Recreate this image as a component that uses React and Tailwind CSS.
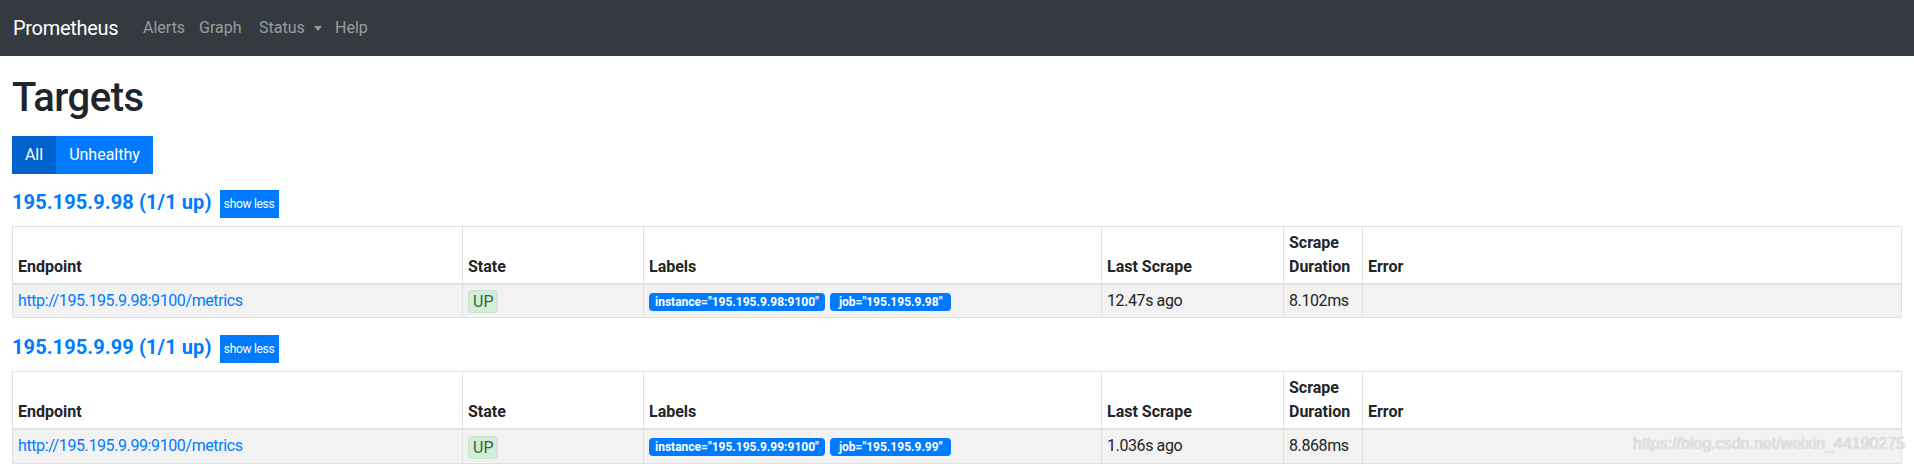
import React from 'react';

const groups = [
    { job: '195.195.9.98', instance: '195.195.9.98:9100', last: '12.47s ago', dur: '8.102ms' },
    { job: '195.195.9.99', instance: '195.195.9.99:9100', last: '1.036s ago', dur: '8.868ms' },
];

function Nav() {
    return (
        <nav className="h-[56px] bg-[#343a40] flex items-center pl-[13px]">
            <span className="w-[130px] text-white text-[20px] leading-[30px] tracking-[-0.3px]">Prometheus</span>
            <a className="w-[56px] text-white/50 text-[16px]">Alerts</a>
            <a className="w-[60px] text-white/50 text-[16px]">Graph</a>
            <a className="w-[76px] text-white/50 text-[16px] flex items-center">
                Status
                <span className="ml-[9px] w-0 h-0 border-l-[4px] border-r-[4px] border-t-[5px] border-l-transparent border-r-transparent border-t-white/50" />
            </a>
            <a className="text-white/50 text-[16px]">Help</a>
        </nav>
    );
}

function TargetTable({ g }) {
    return (
        <table className="table-fixed border-collapse w-[1890px] border border-[#dee2e6] text-[#212529] text-[16px]">
            <colgroup>
                <col className="w-[450px]" />
                <col className="w-[181px]" />
                <col className="w-[458px]" />
                <col className="w-[182px]" />
                <col className="w-[79px]" />
                <col />
            </colgroup>
            <thead>
                <tr className="border-b-2 border-[#dee2e6]">
                    {['Endpoint', 'State', 'Labels', 'Last Scrape', 'Scrape Duration', 'Error'].map((h) => (
                        <th key={h} className="h-[56px] align-bottom text-left font-bold leading-[24px] px-[5px] py-[4px] border-x border-[#dee2e6]">
                            {h}
                        </th>
                    ))}
                </tr>
            </thead>
            <tbody>
                <tr className="bg-[#f2f2f2] tracking-[-0.4px] leading-[24px]">
                    <td className="px-[5px] py-[4px] border border-[#dee2e6]">
                        <a className="text-[#007bff]">http://{g.instance}/metrics</a>
                    </td>
                    <td className="px-[5px] py-[4px] border border-[#dee2e6]">
                        <span className="inline-block align-middle h-[23px] leading-[21px] px-[4px] rounded-[4px] border border-[#c3e6cb] bg-[#d4edda] text-[#2f6b34] tracking-normal">UP</span>
                    </td>
                    <td className="px-[5px] py-[4px] border border-[#dee2e6] tracking-normal">
                        <span className="inline-block align-middle h-[18px] leading-[18px] px-[6px] mr-[5px] rounded-[4px] bg-[#007bff] text-white text-[12px] font-bold">
                            instance="{g.instance}"
                        </span>
                        <span className="inline-block align-middle h-[18px] leading-[18px] px-[9px] rounded-[4px] bg-[#007bff] text-white text-[12px] font-bold">
                            job="{g.job}"
                        </span>
                    </td>
                    <td className="px-[5px] py-[4px] border border-[#dee2e6]">{g.last}</td>
                    <td className="px-[5px] py-[4px] border border-[#dee2e6]">{g.dur}</td>
                    <td className="px-[5px] py-[4px] border border-[#dee2e6]"></td>
                </tr>
            </tbody>
        </table>
    );
}

export default function App() {
    return (
        <div className="relative min-h-[464px] bg-white font-['Roboto',sans-serif] overflow-hidden">
            <Nav />
            <div className="pl-[12px]">
                <h1 className="mt-[18px] mb-[14px] text-[40px] leading-[48px] font-medium tracking-[-0.5px] text-[#212529]">Targets</h1>
                <div className="flex">
                    <button className="w-[44px] h-[38px] bg-[#0062cc] text-white text-[16px]">All</button>
                    <button className="w-[97px] h-[38px] bg-[#007bff] text-white text-[16px]">Unhealthy</button>
                </div>
                {groups.map((g, i) => (
                    <div key={g.job} className={i === 0 ? 'mt-[16px]' : 'mt-[17px]'}>
                        <div className="flex items-start mb-[8px]">
                            <h2 className="text-[20px] leading-[24px] font-bold text-[#007bff] tracking-[0.1px]">{g.job} (1/1 up)</h2>
                            <button className="ml-[8px] w-[59px] h-[28px] bg-[#007bff] text-white text-[12px] tracking-[-0.3px]">show less</button>
                        </div>
                        <TargetTable g={g} />
                    </div>
                ))}
            </div>
            <div className="absolute left-[1633px] top-[434px] font-['Liberation_Sans',sans-serif] text-[16px] leading-[20px] text-[#e4e4e4] [text-shadow:0_0_1px_#b5b5b5]">
                https://blog.csdn.net/weixin_44190275
            </div>
        </div>
    );
}
